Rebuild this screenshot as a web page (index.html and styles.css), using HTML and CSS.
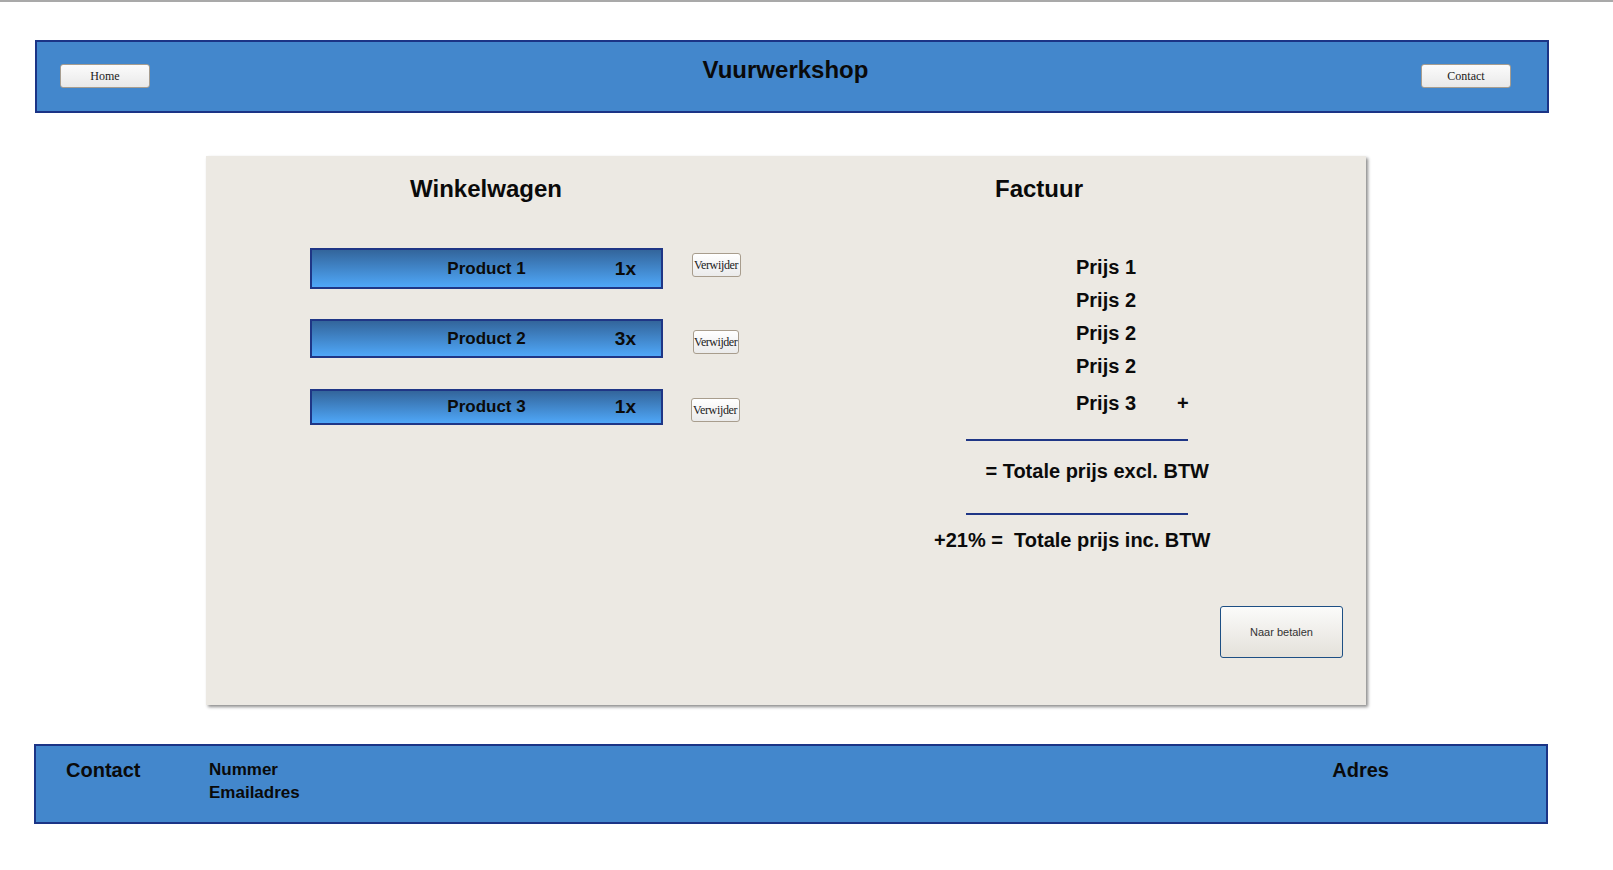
FILE: index.html
```html
<!DOCTYPE html>
<html lang="nl">
<head>
<meta charset="utf-8">
<title>Vuurwerkshop - Winkelwagen</title>
<link rel="stylesheet" href="styles.css">
</head>
<body>
<header class="site-header">
  <button class="btn-classic">Home</button>
  <h1 class="site-title">Vuurwerkshop</h1>
  <button class="btn-classic">Contact</button>
</header>

<main class="panel">
  <div class="panel-cols">
    <section class="cart">
      <h2 class="panel-heading">Winkelwagen</h2>
      <ul class="cart-list">
        <li class="cart-row">
          <div class="product-bar"><span class="product-name">Product 1</span><span class="product-qty">1x</span></div>
          <button class="btn-remove"><span>Verwijder</span></button>
        </li>
        <li class="cart-row">
          <div class="product-bar"><span class="product-name">Product 2</span><span class="product-qty">3x</span></div>
          <button class="btn-remove"><span>Verwijder</span></button>
        </li>
        <li class="cart-row">
          <div class="product-bar"><span class="product-name">Product 3</span><span class="product-qty">1x</span></div>
          <button class="btn-remove"><span>Verwijder</span></button>
        </li>
      </ul>
    </section>

    <section class="invoice">
      <h2 class="panel-heading">Factuur</h2>
      <div class="invoice-body">
        <ul class="price-list">
          <li>Prijs 1</li>
          <li>Prijs 2</li>
          <li>Prijs 2</li>
          <li>Prijs 2</li>
          <li class="price-last">Prijs 3<span class="plus">+</span></li>
        </ul>
        <div class="rule"></div>
        <p class="total total-excl">= Totale prijs excl. BTW</p>
        <div class="rule rule-second"></div>
        <p class="total total-inc">+21% =&nbsp; Totale prijs inc. BTW</p>
      </div>
    </section>
  </div>
  <div class="panel-actions">
    <button class="btn-pay">Naar betalen</button>
  </div>
</main>

<footer class="site-footer">
  <h3 class="footer-title">Contact</h3>
  <div class="footer-details">
    <div>Nummer</div>
    <div>Emailadres</div>
  </div>
  <h3 class="footer-title footer-address">Adres</h3>
</footer>
</body>
</html>
```

FILE: styles.css
```css
* {
  box-sizing: border-box;
}

html, body {
  margin: 0;
  padding: 0;
  background: #ffffff;
}

body {
  border-top: 2px solid #a9a9a9;
  font-family: "Liberation Sans", Arial, sans-serif;
  color: #000;
  width: 1613px;
}

h1, h2, h3, p, ul {
  margin: 0;
  padding: 0;
}

ul {
  list-style: none;
}

/* ---------- Header ---------- */
.site-header {
  margin: 38px 0 0 35px;
  width: 1514px;
  height: 73px;
  background: #4387cc;
  border: 2px solid #1b3486;
  display: flex;
  justify-content: space-between;
  align-items: flex-start;
  padding: 14px 36px 0 23px;
}

.site-title {
  font-size: 24px;
  line-height: 27px;
  font-weight: bold;
  color: #0a0a0a;
}

.btn-classic {
  margin-top: 8px;
  width: 90px;
  height: 24px;
  padding: 0;
  font-family: "Liberation Serif", "Times New Roman", serif;
  font-size: 12px;
  color: #1a1a1a;
  background: linear-gradient(#fbfbfb, #e9e9e9);
  border: 1px solid #a69d90;
  border-radius: 3px;
}

/* ---------- Main panel ---------- */
.panel {
  margin: 43px 0 0 206px;
  width: 1160px;
  background: #ece9e3;
  box-shadow: 2px 2px 3px rgba(0, 0, 0, 0.45);
  padding-top: 19px;
  display: flex;
  flex-direction: column;
}

.panel-cols {
  display: grid;
  grid-template-columns: 560px 546px;
}

.panel-heading {
  font-size: 24px;
  line-height: 28px;
  font-weight: bold;
  text-align: center;
  color: #0a0a0a;
}

/* Cart */
.cart-list {
  margin-top: 45px;
  padding-left: 104px;
}

.cart-row {
  display: flex;
  align-items: flex-start;
}

.cart-row + .cart-row {
  margin-top: 30px;
}

.cart-row:nth-child(3) {
  margin-top: 31px;
}

.product-bar {
  width: 353px;
  height: 41px;
  border: 2px solid #1f3686;
  background: linear-gradient(#33659b, #4fa7f8);
  display: grid;
  grid-template-columns: 1fr auto 1fr;
  align-items: center;
}

.cart-row:nth-child(2) .product-bar {
  height: 39px;
}

.cart-row:nth-child(3) .product-bar {
  height: 36px;
}

.product-name {
  grid-column: 2;
  font-size: 17px;
  font-weight: bold;
  color: #0b0b0b;
}

.product-qty {
  grid-column: 3;
  justify-self: end;
  padding-right: 25px;
  font-size: 19px;
  font-weight: bold;
  color: #0b0b0b;
}

.btn-remove {
  margin: 5px 0 0 29px;
  width: 49px;
  height: 24px;
  padding: 0;
  overflow: hidden;
  text-align: left;
  font-family: "Liberation Serif", "Times New Roman", serif;
  font-size: 12px;
  color: #1a1a1a;
  background: linear-gradient(#ffffff, #ebebeb);
  border: 1px solid #a89d8d;
  border-radius: 3px;
  white-space: nowrap;
}

.btn-remove span {
  display: block;
  padding-left: 1px;
  letter-spacing: -0.35px;
}

.cart-row:nth-child(2) .btn-remove {
  margin: 11px 0 0 30px;
  width: 46px;
}

.cart-row:nth-child(2) .btn-remove span {
  padding-left: 0;
  letter-spacing: -0.45px;
}

.cart-row:nth-child(3) .btn-remove {
  margin: 9px 0 0 28px;
}

/* Invoice */
.invoice-body {
  margin: 48px 0 0 168px;
  width: 275px;
}

.price-list {
  padding-left: 142px;
}

.price-list li {
  font-size: 20px;
  line-height: 33px;
  font-weight: bold;
  color: #0b0b0b;
}

.price-list .price-last {
  margin-top: 4px;
}

.plus {
  margin-left: 41px;
}

.rule {
  margin: 19px 0 0 32px;
  width: 222px;
  height: 2px;
  background: #1f3686;
}

.rule-second {
  margin-top: 30px;
}

.total {
  font-size: 20px;
  line-height: 24px;
  font-weight: bold;
  text-align: right;
  color: #0b0b0b;
  white-space: nowrap;
}

.total-excl {
  margin-top: 18px;
}

.total-inc {
  margin-top: 13px;
}

.panel-actions {
  display: flex;
  justify-content: flex-end;
  padding: 54px 23px 47px 0;
}

.btn-pay {
  width: 123px;
  height: 52px;
  padding: 0;
  font-family: "Liberation Sans", Arial, sans-serif;
  font-size: 11px;
  color: #333;
  background: linear-gradient(#fbfbfa, #e4e1da);
  border: 1px solid #1d4f84;
  border-radius: 3px;
}

/* ---------- Footer ---------- */
.site-footer {
  margin: 39px 0 0 34px;
  width: 1514px;
  height: 80px;
  background: #4387cc;
  border: 2px solid #1b3486;
  display: flex;
  align-items: flex-start;
  padding: 12px 0 0 30px;
}

.footer-title {
  font-size: 20px;
  line-height: 24px;
  font-weight: bold;
  color: #0a0a0a;
}

.site-footer > .footer-title:first-child {
  width: 143px;
}

.footer-details {
  flex: 1;
  font-size: 17px;
  line-height: 23px;
  font-weight: bold;
  color: #0a0a0a;
}

.footer-address {
  margin-right: 157px;
}
```
